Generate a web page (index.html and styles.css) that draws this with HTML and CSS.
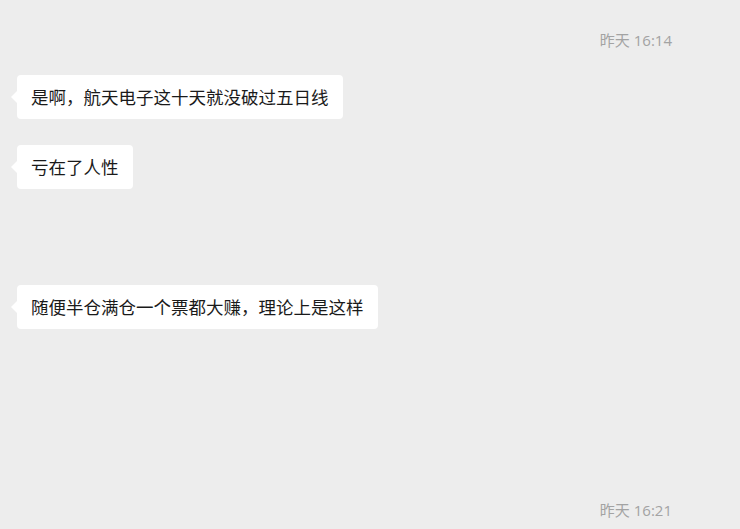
FILE: index.html
```html
<!DOCTYPE html>
<html lang="zh-CN">
<head>
    <meta charset="UTF-8">
    <meta name="viewport" content="width=device-width, initial-scale=1.0">
    <title>聊天记录</title>
    <link rel="stylesheet" href="styles.css">
</head>
<body>
    <div class="chat">
        <div class="time">昨天 16:14</div>

        <div class="bubble first">是啊，航天电子这十天就没破过五日线</div>
        <div class="bubble">亏在了人性</div>
        <div class="bubble after-gap">随便半仓满仓一个票都大赚，理论上是这样</div>

        <div class="time bottom">昨天 16:21</div>
    </div>
</body>
</html>
```

FILE: styles.css
```css
body {
    margin: 0;
    padding: 0;
    background-color: #ededed;
    font-family: "Noto Sans CJK SC", "Noto Sans", sans-serif;
}

.chat {
    display: flex;
    flex-direction: column;
    padding: 30px 0 0 17px;
    height: 529px;
    box-sizing: border-box;
}

.time {
    align-self: flex-end;
    margin-right: 68px;
    font-family: "Open Sans", "Noto Sans CJK SC", sans-serif;
    font-size: 15px;
    line-height: 20px;
    color: #a3a3a3;
}

.time.bottom {
    margin-top: 171px;
}

.bubble {
    position: relative;
    align-self: flex-start;
    margin-top: 26px;
    padding: 10px 14px;
    background-color: #fff;
    border-radius: 4px;
    font-size: 17.5px;
    line-height: 24px;
    color: #1a1a1a;
}

.bubble::before {
    content: "";
    position: absolute;
    left: -6px;
    top: 50%;
    margin-top: -6px;
    border-top: 6px solid transparent;
    border-bottom: 6px solid transparent;
    border-right: 6px solid #fff;
}

.bubble.first {
    margin-top: 25px;
}

.bubble.after-gap {
    margin-top: 96px;
}
```
